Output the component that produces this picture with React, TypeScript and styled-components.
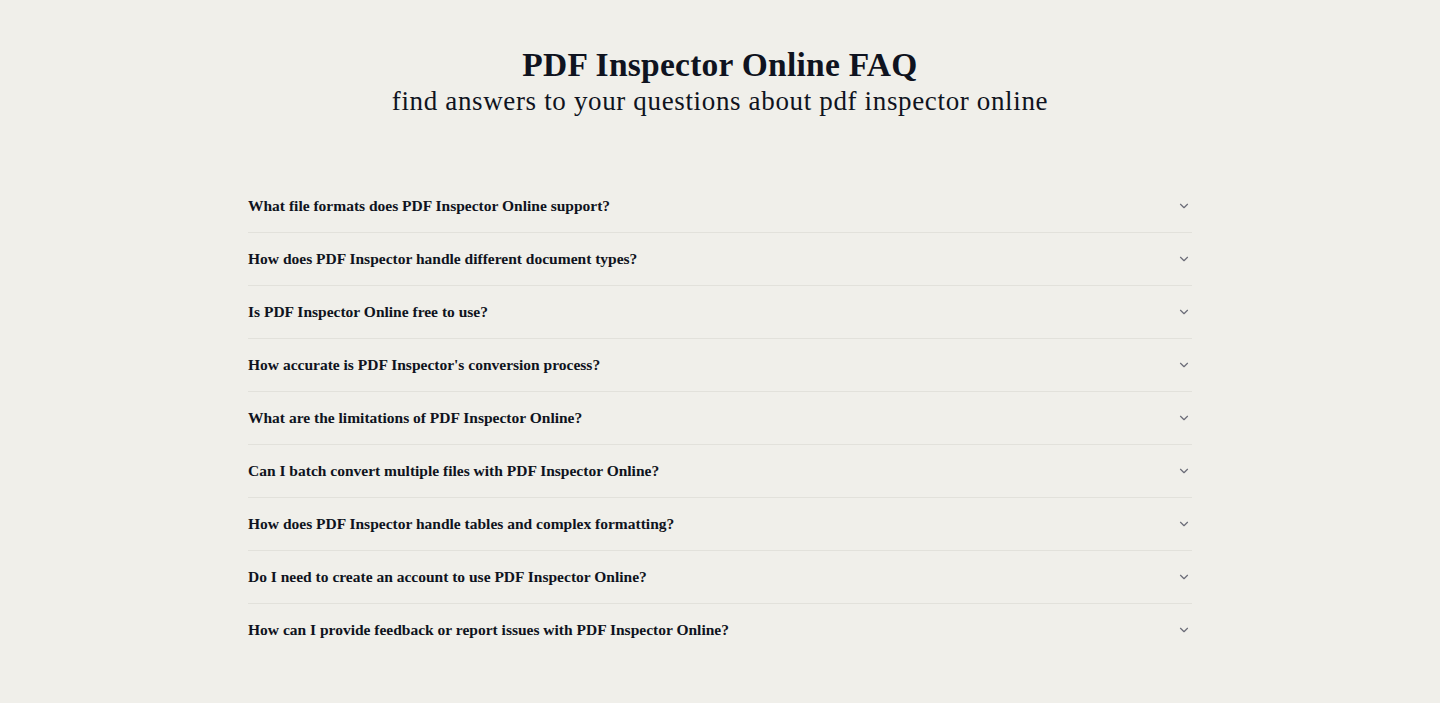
import React from "react";
import styled, { createGlobalStyle } from "styled-components";

const GlobalStyle = createGlobalStyle`
  html, body { margin: 0; padding: 0; background: #f0efea; }
  body { font-family: "Liberation Serif", "DejaVu Serif", serif; color: #0f1320; }
`;

const Page = styled.main`
  min-height: 703px;
  display: flex;
  flex-direction: column;
  align-items: center;
  padding-top: 44px;
  box-sizing: border-box;
`;

const Header = styled.header`
  display: flex;
  flex-direction: column;
  align-items: center;
  text-align: center;
`;

const Title = styled.h1`
  margin: 0;
  font-size: 33.5px;
  line-height: 42px;
  font-weight: 700;
  letter-spacing: 0.25px;
`;

const Subtitle = styled.p`
  margin: 0;
  font-size: 27px;
  line-height: 30px;
  font-weight: 400;
  letter-spacing: 0.65px;
`;

const List = styled.section`
  width: 944px;
  margin-top: 64px;
  display: flex;
  flex-direction: column;
`;

const Item = styled.div<{ $last?: boolean }>`
  border-bottom: ${(p) => (p.$last ? "none" : "1px solid #e2e1db")};
`;

const Trigger = styled.button`
  width: 100%;
  height: 52px;
  display: flex;
  align-items: center;
  justify-content: space-between;
  padding: 0;
  border: none;
  background: transparent;
  cursor: pointer;
  font-family: "Liberation Serif", "DejaVu Serif", serif;
  font-size: 15.5px;
  font-weight: 700;
  color: #0f1320;
  text-align: left;
  letter-spacing: 0;
`;

const Chevron = styled.svg`
  width: 14px;
  height: 14px;
  margin-right: 1px;
  flex-shrink: 0;
`;

const questions = [
  "What file formats does PDF Inspector Online support?",
  "How does PDF Inspector handle different document types?",
  "Is PDF Inspector Online free to use?",
  "How accurate is PDF Inspector's conversion process?",
  "What are the limitations of PDF Inspector Online?",
  "Can I batch convert multiple files with PDF Inspector Online?",
  "How does PDF Inspector handle tables and complex formatting?",
  "Do I need to create an account to use PDF Inspector Online?",
  "How can I provide feedback or report issues with PDF Inspector Online?",
];

export default function App() {
  return (
    <>
      <GlobalStyle />
      <Page>
        <Header>
          <Title>PDF Inspector Online FAQ</Title>
          <Subtitle>find answers to your questions about pdf inspector online</Subtitle>
        </Header>
        <List>
          {questions.map((q, i) => (
            <Item key={q} $last={i === questions.length - 1}>
              <Trigger>
                <span>{q}</span>
                <Chevron viewBox="0 0 24 24" fill="none" stroke="#6b6c78" strokeWidth="2" strokeLinecap="round" strokeLinejoin="round">
                  <path d="m6 9 6 6 6-6" />
                </Chevron>
              </Trigger>
            </Item>
          ))}
        </List>
      </Page>
    </>
  );
}
